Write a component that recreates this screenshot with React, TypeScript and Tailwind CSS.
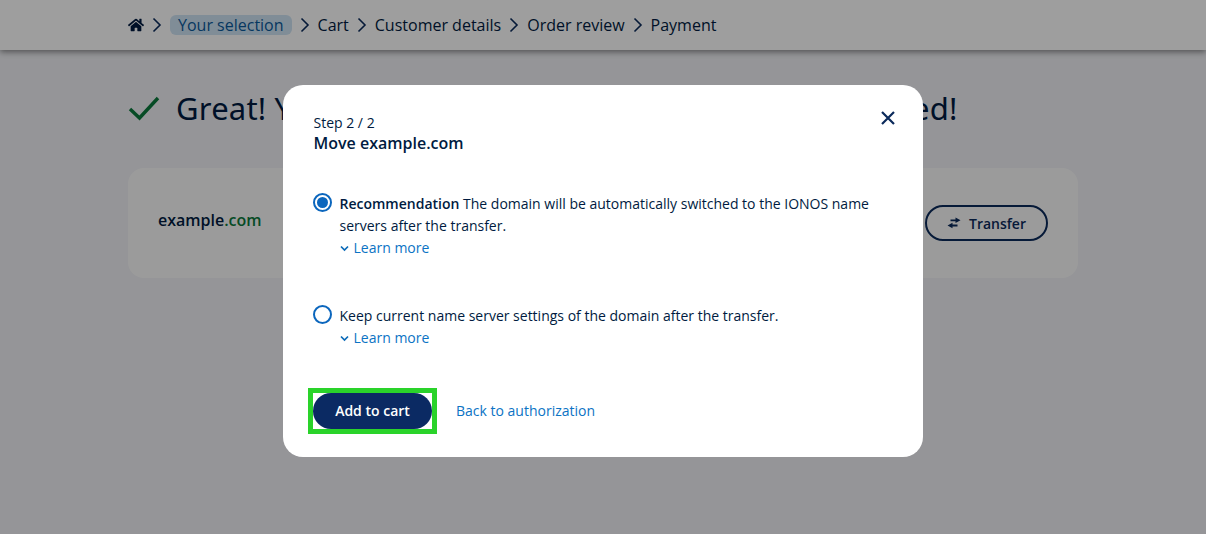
import React from "react";
import { FaHome } from "react-icons/fa";

const Crumb = () => (
  <svg width="10" height="16" viewBox="0 0 10 16" fill="none" stroke="#0b2a5b" strokeWidth="1.6" className="shrink-0">
    <path d="M1.5 1.5 L8 8 L1.5 14.5" />
  </svg>
);

const LearnMore = () => (
  <a className="flex items-center gap-[5px] text-[14px] leading-[22px] text-[#0b73c4]">
    <svg width="9" height="7" viewBox="0 0 9 7" fill="none" stroke="#0b6ab8" strokeWidth="1.7" className="mt-[1px]">
      <path d="M1 1.5 L4.5 5 L8 1.5" />
    </svg>
    Learn more
  </a>
);

export default function App() {
  return (
    <div className="relative h-[534px] overflow-hidden bg-white text-[#001b41] [font-family:'Open_Sans',sans-serif]">
      <header className="relative flex h-[50px] items-center gap-[8px] bg-white pl-[128px] text-[16px] shadow-[0_2px_6px_rgba(0,0,0,0.45)]">
        <FaHome className="text-[16px] text-[#001b41]" />
        <Crumb />
        <span className="rounded-[6px] bg-[#cfe4f4] px-[8px] leading-[20px] text-[#0b5a9c]">Your selection</span>
        <Crumb />
        <span>Cart</span>
        <Crumb />
        <span>Customer details</span>
        <Crumb />
        <span>Order review</span>
        <Crumb />
        <span>Payment</span>
      </header>
      <main className="h-[484px] bg-[#f0f1f5] px-[128px] pt-[38px]">
        <div className="flex items-center gap-[16px]">
          <svg width="32" height="26" viewBox="0 0 32 26" fill="none" stroke="#0a7a3c" strokeWidth="3.4">
            <path d="M2 14 L11.5 23 L30 3" />
          </svg>
          <h1 className="whitespace-nowrap text-[31px] leading-[40px] tracking-[0.2px] text-[#001b41] [font-family:'Noto_Sans',sans-serif]">
            Great! Your domain example.com can be transferred!
          </h1>
        </div>
        <div className="mt-[40px] flex h-[110px] items-center justify-between rounded-[16px] bg-[#fbfbfb] px-[30px]">
          <div className="mb-[6px] text-[16px] font-semibold">
            example<span className="text-[#0a7a3c]">.com</span>
          </div>
          <button className="flex h-[36px] w-[123px] items-center justify-center gap-[8px] rounded-full border-2 border-[#0b2a5b] text-[14px] font-semibold text-[#0b2a5b]">
            <svg width="14" height="12" viewBox="0 0 14 12" fill="#0b2a5b">
              <path d="M8.5 0.5 L13.5 3.2 L8.5 6 V4.2 H3.5 V2.4 H8.5 Z" />
              <path d="M5.5 5.8 V7.6 H10.5 V9.4 H5.5 V11.2 L0.5 8.6 Z" />
            </svg>
            Transfer
          </button>
        </div>
      </main>

      <div className="absolute inset-0 flex justify-center bg-[rgba(0,0,0,0.38)] pt-[85px]">
        <div className="relative h-[372px] w-[640px] rounded-[20px] bg-white pl-[30px] pr-[24px] pt-[28px] text-[#001b41]">
          <button className="absolute right-[27px] top-[25px]">
            <svg width="16" height="16" viewBox="0 0 16 16" fill="none" stroke="#0b2a5b" strokeWidth="2.2">
              <path d="M2 2 L14 14 M14 2 L2 14" />
            </svg>
          </button>
          <div className="pl-[0.5px] text-[14px] leading-[20px]">Step 2 / 2</div>
          <div className="pl-[0.5px] text-[16px] font-semibold leading-[20px]">Move example.com</div>

          <div className="mt-[40px] flex gap-[7.5px]">
            <div className="flex h-[19px] w-[19px] shrink-0 items-center justify-center rounded-full border-2 border-[#0b66bd]">
              <div className="h-[11px] w-[11px] rounded-full bg-[#0b66bd]" />
            </div>
            <div>
              <p className="w-[545px] text-[14px] leading-[22px]">
                <strong className="font-semibold">Recommendation</strong> The domain will be automatically switched to the IONOS name servers after the transfer.
              </p>
              <LearnMore />
            </div>
          </div>

          <div className="mt-[46px] flex gap-[7.5px]">
            <div className="h-[19px] w-[19px] shrink-0 rounded-full border-2 border-[#0b66bd]" />
            <div>
              <p className="text-[14px] leading-[22px]">Keep current name server settings of the domain after the transfer.</p>
              <LearnMore />
            </div>
          </div>

          <div className="-ml-[5px] mt-[39px] flex items-center gap-[19px]">
            <div className="border-[5px] border-[#2ad32a]">
              <button className="h-[36px] w-[119px] rounded-full bg-[#0b2a63] pb-[1px] text-[14px] font-semibold text-white">Add to cart</button>
            </div>
            <a className="mb-[2px] text-[14px] text-[#0b73c4]">Back to authorization</a>
          </div>
        </div>
      </div>
    </div>
  );
}
